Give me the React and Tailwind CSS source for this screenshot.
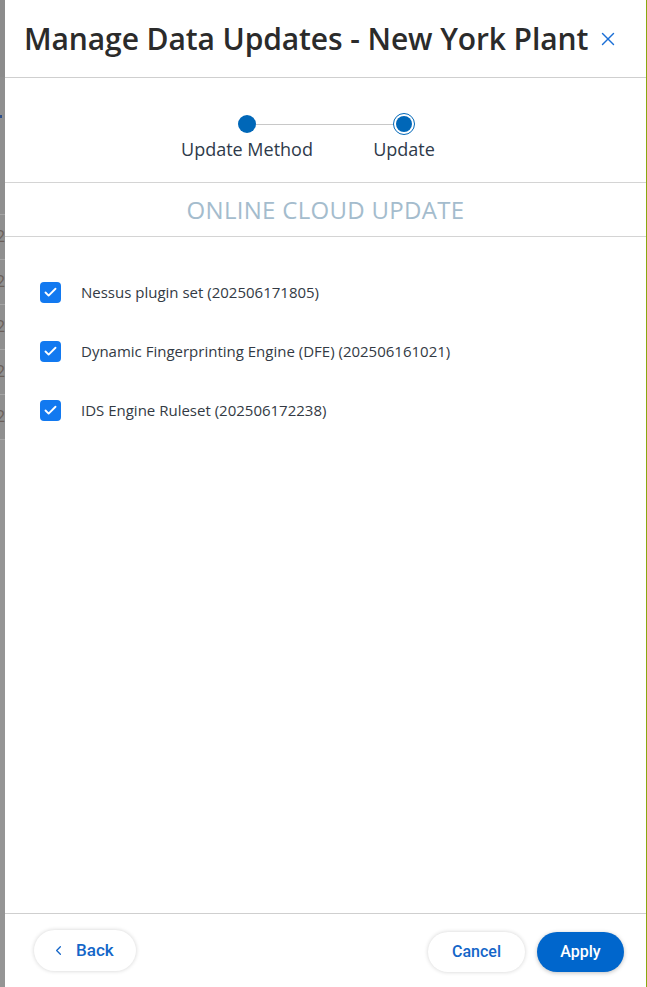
import { Check, ChevronLeft, X } from 'lucide-react';

const items = [
  'Nessus plugin set (202506171805)',
  'Dynamic Fingerprinting Engine (DFE) (202506161021)',
  'IDS Engine Ruleset (202506172238)',
];

function BackdropStrip() {
  // dimmed page behind the drawer, only a sliver of it shows
  return (
    <div className="w-[5px] shrink-0 overflow-hidden bg-[#8f8f8f] flex flex-col">
      <div className="h-[77px] bg-[#8c8c8c]" />
      <div className="h-[137px] bg-[#8f8f8f] relative">
        <div className="absolute left-0 top-[38px] h-[3px] w-[2px] bg-[#2d4f8a]" />
      </div>
      {[0, 1, 2, 3, 4].map((i) => (
        <div
          key={i}
          className="h-[45px] border-t border-[#a5a5a5] text-[16px] leading-[42px] text-[#6b5f5a] -ml-[4px]"
          style={{ fontFamily: '"Open Sans", sans-serif' }}
        >
          2
        </div>
      ))}
      <div className="flex-1 border-t border-[#a5a5a5] bg-[#959595]" />
    </div>
  );
}

export default function App() {
  return (
    <div className="flex h-[987px] w-[647px] bg-white" style={{ fontFamily: '"Open Sans", "Noto Sans", sans-serif' }}>
      <BackdropStrip />

      <div className="flex flex-1 flex-col bg-white">
        {/* header */}
        <div className="flex h-[78px] shrink-0 items-center justify-between border-b border-[#cfcfcf] pl-[19px] pr-[27px]">
          <h1 className="text-[30px] font-semibold leading-none tracking-[-0.1px] text-[#2b2b2b]">
            Manage Data Updates - New York Plant
          </h1>
          <X className="h-[22px] w-[22px] text-[#1a6fd6]" strokeWidth={1.5} />
        </div>

        {/* stepper */}
        <div className="flex h-[105px] shrink-0 justify-center border-b border-[#d4d4d4] pt-[37px]">
          <div className="relative grid grid-cols-[157px_157px]">
            <div className="absolute left-[87px] right-[88px] top-[9px] h-px bg-[#c8c8c8]" />
            <div className="relative flex flex-col items-center">
              <div className="h-[18px] w-[18px] rounded-full bg-[#0067b8]" />
              <span className="mt-[4px] text-[18px] leading-[24px] text-[#2e3a4a]">Update Method</span>
            </div>
            <div className="relative flex flex-col items-center">
              <div className="-mt-[2px] flex h-[22px] w-[22px] items-center justify-center rounded-full border-[1.5px] border-[#0067b8] bg-white">
                <div className="h-[16px] w-[16px] rounded-full bg-[#0067b8]" />
              </div>
              <span className="mt-[2px] text-[18px] leading-[24px] text-[#2e3a4a]">Update</span>
            </div>
          </div>
        </div>

        {/* section title */}
        <div className="flex h-[54px] shrink-0 items-center justify-center border-b border-[#d4d4d4]">
          <span className="text-[24px] tracking-[0.3px] text-[#a4bccd]">ONLINE CLOUD UPDATE</span>
        </div>

        {/* list */}
        <div className="flex flex-1 flex-col gap-[38px] pl-[35px] pt-[45px]">
          {items.map((label) => (
            <label key={label} className="flex items-center gap-[20px]">
              <span className="flex h-[21px] w-[21px] items-center justify-center rounded-[4px] bg-[#1279f0]">
                <Check className="h-[15px] w-[15px] text-white" strokeWidth={3} />
              </span>
              <span className="text-[15px] leading-[21px] text-[#333a44]">{label}</span>
            </label>
          ))}
        </div>

        {/* footer */}
        <div className="flex h-[74px] shrink-0 items-start justify-between border-t border-[#cfcfcf] pl-[29px] pr-[22px]">
          <button
            className="mt-[16px] flex h-[41px] w-[102px] items-center gap-[10px] rounded-full bg-white pl-[17px] text-[17px] font-medium text-[#1466c8] shadow-[0_0_4px_rgba(0,0,0,0.18)]"
            style={{ fontFamily: 'Roboto, sans-serif' }}
          >
            <ChevronLeft className="h-[15px] w-[15px]" strokeWidth={2} />
            Back
          </button>
          <div className="mt-[18px] flex gap-[12px]">
            <button
              className="h-[40px] w-[97px] rounded-full bg-white text-[16px] font-medium text-[#1466c8] shadow-[0_0_4px_rgba(0,0,0,0.18)]"
              style={{ fontFamily: 'Roboto, sans-serif' }}
            >
              Cancel
            </button>
            <button
              className="h-[40px] w-[87px] rounded-full bg-[#0066cc] text-[16px] font-medium text-white shadow-[0_1px_4px_rgba(0,0,0,0.25)]"
              style={{ fontFamily: 'Roboto, sans-serif' }}
            >
              Apply
            </button>
          </div>
        </div>
      </div>

      <div className="w-px shrink-0 bg-[#8aa80f]" />
    </div>
  );
}
